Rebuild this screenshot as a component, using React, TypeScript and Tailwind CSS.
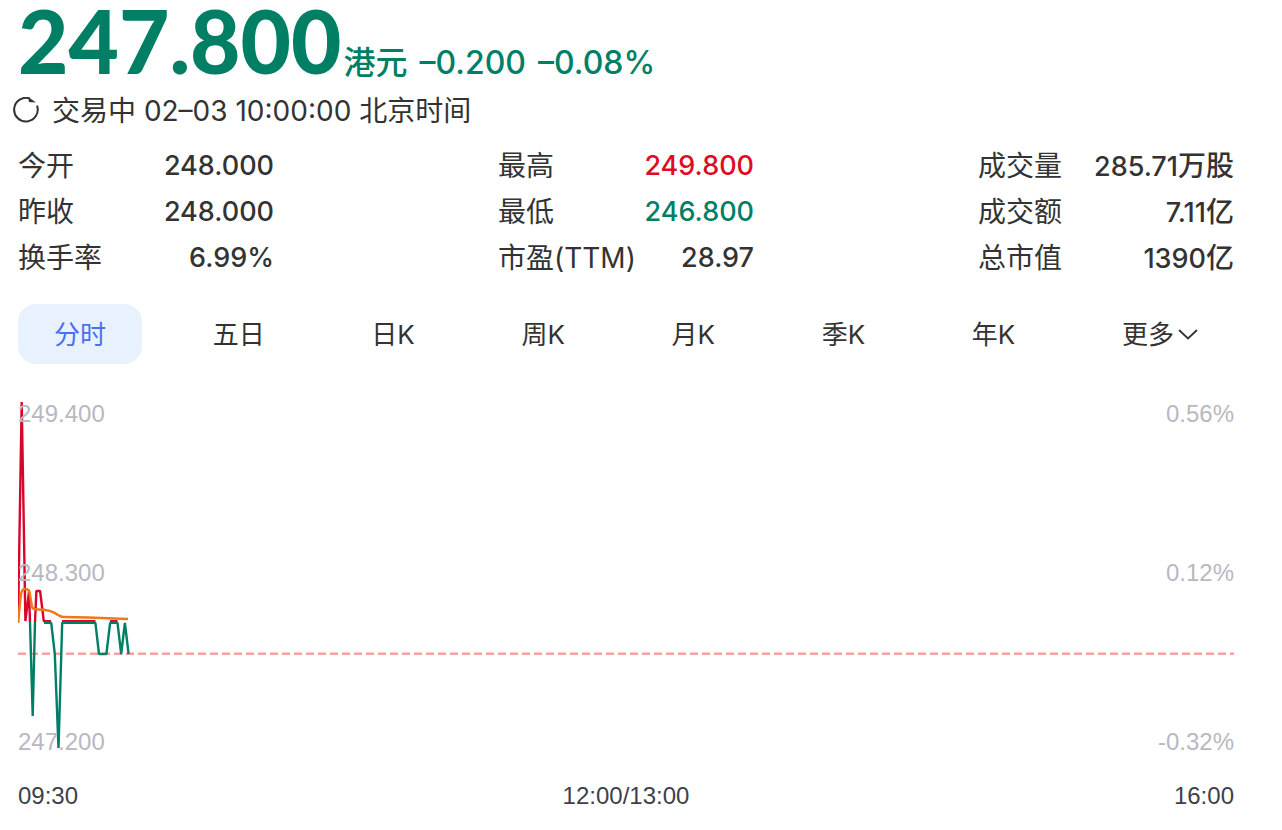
import { useState } from 'react';

type Tone = 'up' | 'down' | 'flat';

interface Stat {
  label: string;
  value: string;
  unit?: string;
  tone?: Tone;
}

const TONE_CLASS: Record<Tone, string> = {
  up: 'text-[#e00a25]',
  down: 'text-[#007f65]',
  flat: 'text-[#333333]',
};

const STAT_COLUMNS: Stat[][] = [
  [
    { label: '今开', value: '248.000' },
    { label: '昨收', value: '248.000' },
    { label: '换手率', value: '6.99%' },
  ],
  [
    { label: '最高', value: '249.800', tone: 'up' },
    { label: '最低', value: '246.800', tone: 'down' },
    { label: '市盈(TTM)', value: '28.97' },
  ],
  [
    { label: '成交量', value: '285.71', unit: '万股' },
    { label: '成交额', value: '7.11', unit: '亿' },
    { label: '总市值', value: '1390', unit: '亿' },
  ],
];

const TABS = ['分时', '五日', '日K', '周K', '月K', '季K', '年K'];

// Chart space: x 0-1216 covers the session, y 0-346 covers 249.4 down to 247.2
const UP_LINES = [
  '0,221 3.7,0 7.4,219 11,190 12,220',
  '17,220 18.4,189 22.1,189 25.8,219.2 33,219.2',
  '44,219.2 77.4,219.2',
  '92,219.2 99.5,219.2',
];
const DOWN_LINES = [
  '12,220 14.7,314 17,220',
  '26,220.8 33.2,220.8 36.8,252 40.5,346 44.2,220.8 77.4,220.8 81,252 88.4,252 92.1,220.8 99.5,220.8 103.2,252 106.9,220.8 110.6,252',
];
const AVERAGE_LINE =
  'M0 221 L3 192 Q4 187 7 187 Q11 187 11.5 190 L14 205 Q15 207.5 20 207.5 C28 207.5 35 209 40 213 Q43 215 46 215 L70 215.5 L110 217';

function RefreshIcon() {
  return (
    <svg className="h-7 w-7" viewBox="0 0 28 28" fill="none" aria-hidden="true">
      <path d="M18 1.6 A11.8 11.8 0 1 0 25 8.6" stroke="#333333" strokeWidth="2" />
      <path d="M16.6 0.2 L24 5.4 L16.8 5 Z" fill="#333333" />
    </svg>
  );
}

function StatRow({ label, value, unit, tone = 'flat' }: Stat) {
  return (
    <div className="flex h-[46px] items-center justify-between">
      <dt className="text-[28px]">{label}</dt>
      <dd className={`flex items-baseline text-[27px] font-medium ${TONE_CLASS[tone]}`}>
        {value}
        {unit && <span className="text-[28px]">{unit}</span>}
      </dd>
    </div>
  );
}

function PriceChart() {
  return (
    <section className="mt-[38px] font-['Liberation_Sans',sans-serif] text-2xl leading-6">
      <div className="relative text-[#b8b8c2]">
        <svg
          className="block h-[346px] w-full"
          viewBox="0 0 1216 346"
          preserveAspectRatio="none"
          fill="none"
          role="img"
          aria-label="分时"
        >
          <line x1="0" y1="251.7" x2="1216" y2="251.7" stroke="#f9a0a0" strokeWidth="2.4" strokeDasharray="8 4" />
          {UP_LINES.map((points) => (
            <polyline key={points} points={points} stroke="#d9062b" strokeWidth="2.4" strokeLinejoin="bevel" />
          ))}
          {DOWN_LINES.map((points) => (
            <polyline key={points} points={points} stroke="#007f65" strokeWidth="2.4" strokeLinejoin="bevel" />
          ))}
          <path d={AVERAGE_LINE} stroke="#f07818" strokeWidth="2.4" />
        </svg>
        <span className="absolute top-0 left-0">249.400</span>
        <span className="absolute top-[159px] left-0">248.300</span>
        <span className="absolute top-[328px] left-0">247.200</span>
        <span className="absolute top-0 right-0">0.56%</span>
        <span className="absolute top-[159px] right-0">0.12%</span>
        <span className="absolute top-[328px] right-0">-0.32%</span>
      </div>
      <div className="mt-9 flex justify-between text-[#3d3f4d]">
        <span>09:30</span>
        <span>12:00/13:00</span>
        <span>16:00</span>
      </div>
    </section>
  );
}

export default function App() {
  const [activeTab, setActiveTab] = useState('分时');

  return (
    <main className="min-h-screen bg-white pr-12 pl-[18px] font-['Inter','Noto_Sans_CJK_SC',sans-serif] text-[#333333]">
      <header>
        <div className="flex items-baseline gap-0.5 text-[#007f65]">
          <h1 className="font-['Lato',sans-serif] text-[87px] leading-[82px] font-black">247.800</h1>
          <p className="flex gap-3 text-[32px] leading-10 font-medium">
            <span>港元</span>
            <span>–0.200</span>
            <span>–0.08%</span>
          </p>
        </div>
        <div className="mt-1.5 -ml-1.5 flex items-center gap-3">
          <button type="button" aria-label="刷新">
            <RefreshIcon />
          </button>
          <p className="text-[28px] leading-11">交易中 02–03 10:00:00 北京时间</p>
        </div>
      </header>

      <dl className="mt-2.5 flex justify-between">
        {STAT_COLUMNS.map((column) => (
          <div key={column[0].label} className="w-64">
            {column.map((stat) => (
              <StatRow key={stat.label} {...stat} />
            ))}
          </div>
        ))}
      </dl>

      <nav className="mt-[23px] flex justify-between text-[26px]">
        {TABS.map((tab) => (
          <button
            key={tab}
            type="button"
            onClick={() => setActiveTab(tab)}
            className={`h-15 rounded-[18px] px-9 ${
              tab === activeTab ? 'bg-[#e8f2ff] text-[#4e6ef2]' : ''
            }`}
          >
            {tab}
          </button>
        ))}
        <button type="button" className="flex h-15 items-center gap-1 px-9">
          更多
          <svg className="h-5 w-5" viewBox="0 0 20 20" fill="none" aria-hidden="true">
            <path d="M1 6 L10 14.5 L19 6" stroke="#333333" strokeWidth="1.8" />
          </svg>
        </button>
      </nav>

      <PriceChart />
    </main>
  );
}
